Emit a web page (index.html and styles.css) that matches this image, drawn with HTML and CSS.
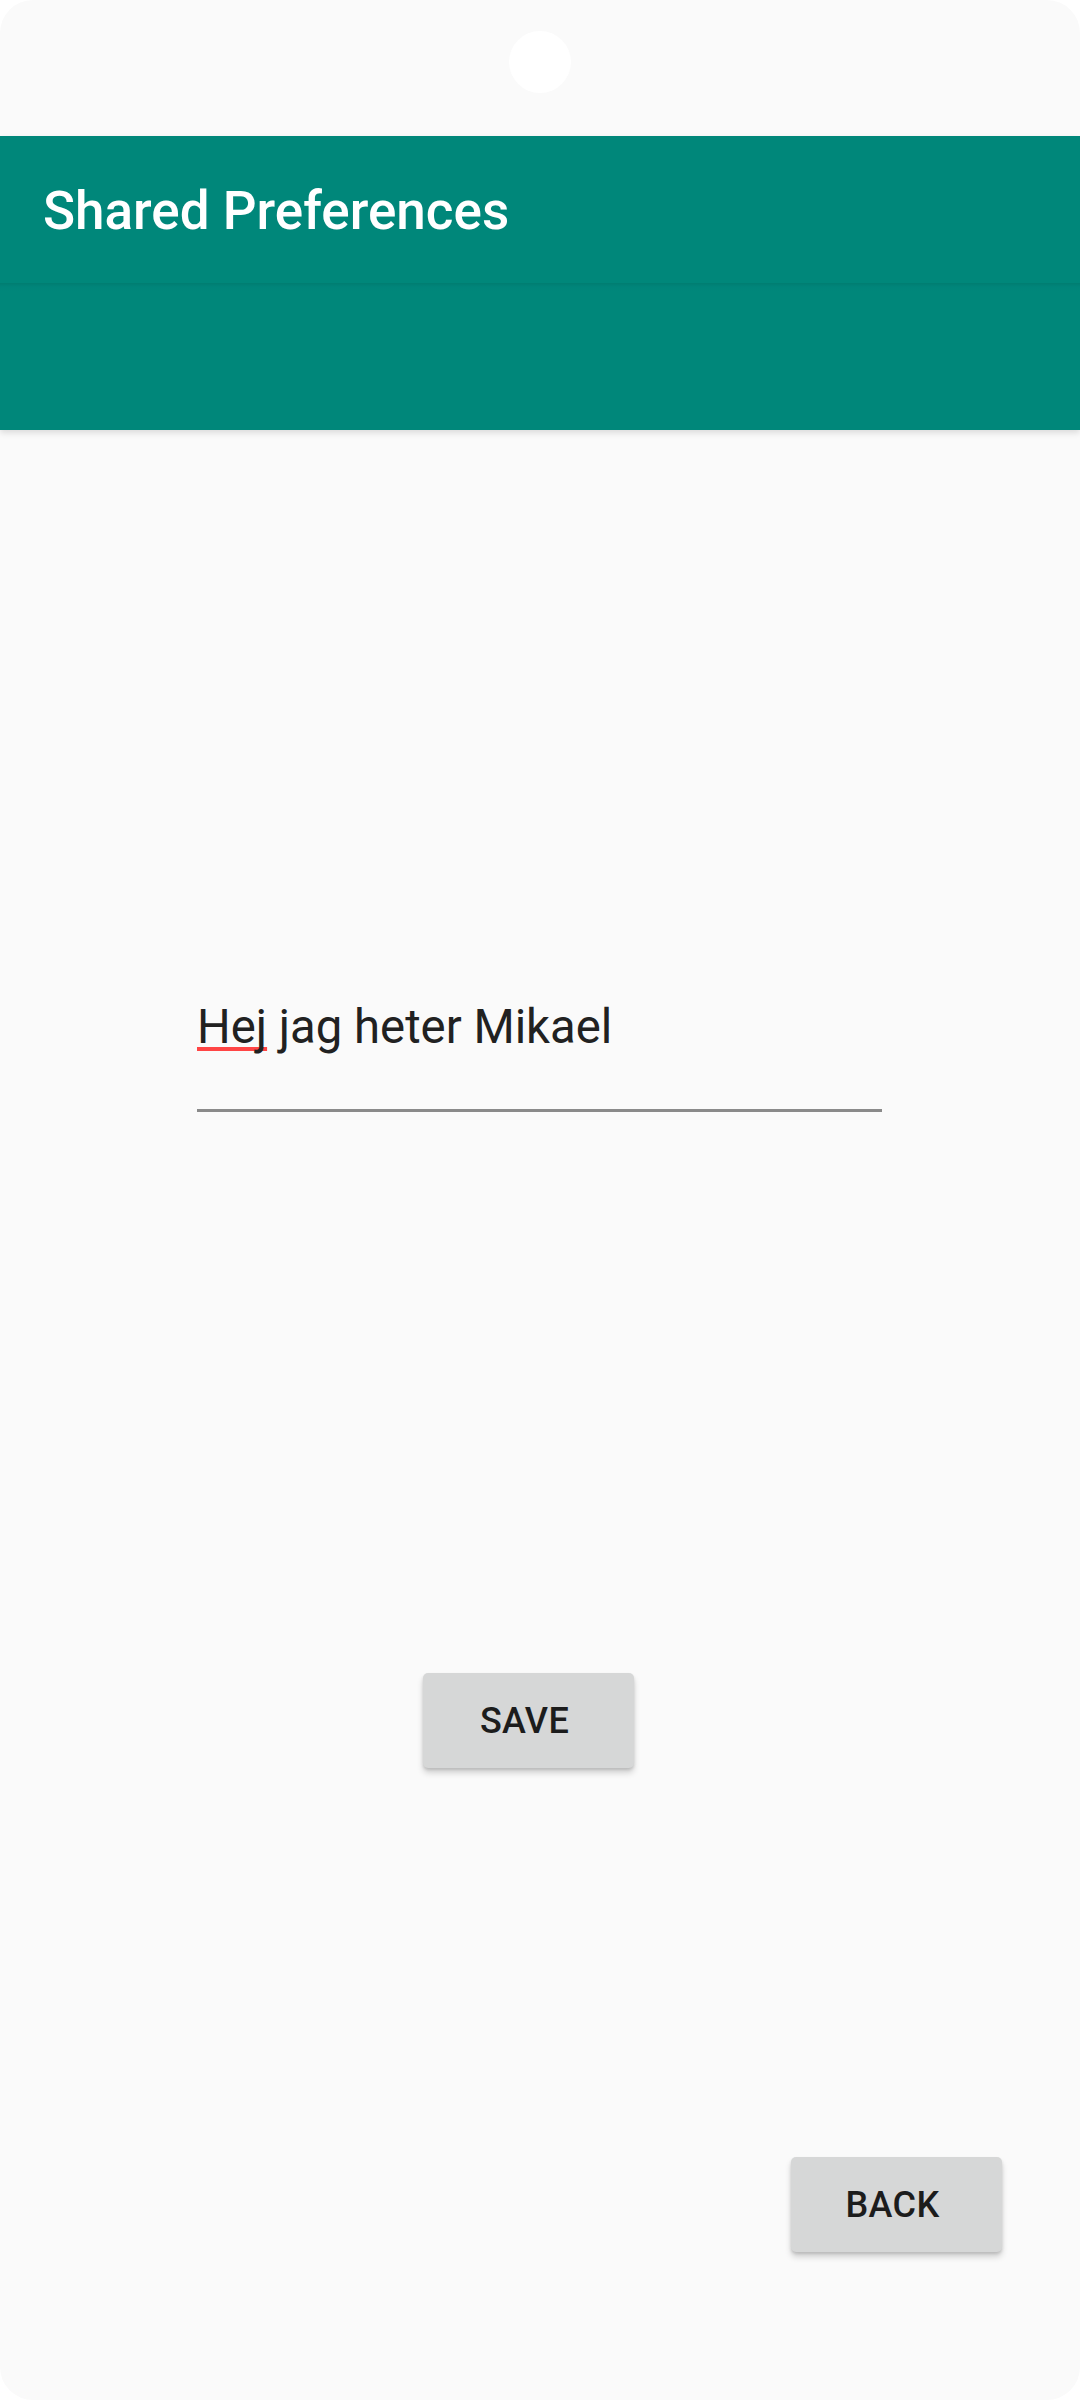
FILE: index.html
```html
<!DOCTYPE html>
<html>
<head>
<meta charset="utf-8">
<link rel="stylesheet" href="styles.css">
</head>
<body>
<div class="screen">
  <div class="statusbar"><div class="camera"></div></div>
  <header class="appbar">
    <div class="toolbar"><span class="title">Shared Preferences</span></div>
    <div class="extension"></div>
  </header>
  <main class="content">
    <div class="field">
      <div class="field-text"><span class="misspelled">Hej</span> jag heter Mikael</div>
      <div class="field-line"></div>
    </div>
    <div class="save-row"><button class="btn">SAVE</button></div>
    <div class="back-row"><button class="btn">BACK</button></div>
  </main>
</div>
</body>
</html>
```
FILE: styles.css
```css
html, body {
  margin: 0;
  padding: 0;
  background: #ffffff;
}
.screen {
  width: 1080px;
  height: 2400px;
  background: #fafafa;
  border-radius: 33px;
  overflow: hidden;
  display: flex;
  flex-direction: column;
  font-family: Roboto, "Noto Sans", sans-serif;
}
.statusbar {
  height: 136px;
  display: flex;
  justify-content: center;
  padding-top: 31px;
  box-sizing: border-box;
}
.camera {
  width: 62px;
  height: 62px;
  border-radius: 50%;
  background: #ffffff;
}
.appbar {
  background: #00877a;
  box-shadow: 0 3px 6px rgba(0,0,0,0.12);
  position: relative;
  z-index: 1;
}
.toolbar {
  height: 147px;
  display: flex;
  align-items: center;
  padding-left: 43px;
  box-sizing: border-box;
}
.title {
  color: #ffffff;
  font-size: 53px;
  font-weight: 500;
  margin-top: 2px;
}
.extension {
  height: 147px;
  background: linear-gradient(#007d71 0px, #00857a 4px, #00877a 8px);
}
.content {
  flex: 1;
  display: flex;
  flex-direction: column;
}
.field {
  margin-top: 569px;
  margin-left: 197px;
  width: 685px;
}
.field-text {
  font-size: 47.25px;
  line-height: 56px;
  color: #212121;
  height: 56px;
}
.misspelled {
  text-decoration-line: underline;
  text-decoration-color: #ff4545;
  text-decoration-thickness: 4px;
  text-underline-offset: 4px;
  text-decoration-skip-ink: none;
}
.field-line {
  margin-top: 54px;
  height: 3px;
  background: #8a8a8a;
}
.save-row {
  margin-top: 561px;
  padding-left: 423px;
  display: flex;
}
.back-row {
  margin-top: 389px;
  padding-left: 791px;
  display: flex;
}
.btn {
  width: 211px;
  height: 95px;
  border: none;
  border-radius: 5px;
  background: #d6d7d7;
  color: #1c1c1c;
  font-family: Roboto, "Noto Sans", sans-serif;
  font-size: 36px;
  font-weight: 500;
  letter-spacing: 0.01em;
  padding: 0 8px 0 0;
  box-shadow: 0 5px 6px rgba(0,0,0,0.16), 0 2px 3px rgba(0,0,0,0.12);
}
```
